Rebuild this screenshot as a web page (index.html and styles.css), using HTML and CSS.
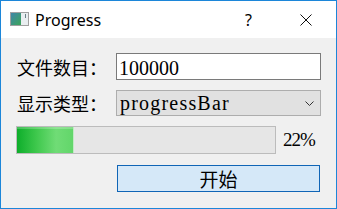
FILE: index.html
```html
<!DOCTYPE html>
<html lang="zh-CN">
<head>
    <meta charset="UTF-8">
    <title>Progress</title>
    <link rel="stylesheet" href="styles.css">
</head>
<body>
    <div class="window">
        <div class="titlebar">
            <svg class="app-icon" width="19" height="14" viewBox="0 0 19 14">
                <defs>
                    <linearGradient id="ico" x1="0" y1="0" x2="1" y2="1">
                        <stop offset="0" stop-color="#3f86a8"/>
                        <stop offset="1" stop-color="#3da55a"/>
                    </linearGradient>
                </defs>
                <rect x="0.5" y="0.5" width="18" height="13" fill="#f2f2f2" stroke="#a0a0a0"/>
                <rect x="1" y="1" width="10" height="12" fill="url(#ico)"/>
                <rect x="11" y="1" width="7" height="12" fill="#e9eef0"/>
                <rect x="15" y="2" width="1" height="4" fill="#6b7f88"/>
            </svg>
            <span class="title">Progress</span>
            <span class="help">?</span>
            <svg class="close" width="12" height="12" viewBox="0 0 12 12">
                <path d="M0.5 0.5 L11.5 11.5 M11.5 0.5 L0.5 11.5" stroke="#111" stroke-width="1" fill="none"/>
            </svg>
        </div>

        <div class="content">
            <div class="field-row">
                <label class="field-label">文件数目：</label>
                <div class="line-edit">100000</div>
            </div>
            <div class="field-row">
                <label class="field-label">显示类型：</label>
                <div class="combo">
                    <span class="combo-text">progressBar</span>
                    <svg class="chevron" width="9" height="5" viewBox="0 0 9 5">
                        <path d="M0.5 0.5 L4.5 4.5 L8.5 0.5" stroke="#333" stroke-width="1" fill="none"/>
                    </svg>
                </div>
            </div>
            <div class="progress-row">
                <div class="progress">
                    <div class="chunk" style="width: 22%"></div>
                </div>
                <span class="percent">22%</span>
            </div>
            <button class="start-btn">开始</button>
        </div>
    </div>
</body>
</html>
```

FILE: styles.css
```css
body {
    margin: 0;
    background: #f0f0f0;
}

.window {
    width: 337px;
    height: 209px;
    box-sizing: border-box;
    border: 1px solid #1c86d9;
    background: #f0f0f0;
}

.titlebar {
    height: 37px;
    background: #fff;
    display: flex;
    align-items: center;
    padding-left: 9px;
    font-family: "Noto Sans", sans-serif;
    font-size: 16px;
    color: #000;
}

.app-icon {
    margin-top: -1px;
}

.title {
    margin-left: 6px;
}

.help {
    margin-left: auto;
    margin-right: 48px;
}

.close {
    margin-right: 24px;
}

.content {
    padding: 15px 15px 0 15px;
    display: flex;
    flex-direction: column;
}

.field-row {
    display: grid;
    grid-template-columns: 100px 1fr;
    align-items: center;
}

.field-row + .field-row {
    margin-top: 10px;
}

.field-label {
    padding-left: 1px;
    font-family: "Noto Sans CJK SC", sans-serif;
    font-size: 18px;
    line-height: 1;
    color: #000;
}

.line-edit {
    height: 27px;
    box-sizing: border-box;
    border: 1px solid #7a7a7a;
    background: #fff;
    padding: 3px 0 0 2px;
    font-family: "Liberation Serif", serif;
    font-size: 20px;
    line-height: 22px;
}

.combo {
    height: 26px;
    box-sizing: border-box;
    border: 1px solid #adadad;
    background: #e1e1e1;
    padding: 1px 6px 0 3px;
    display: flex;
    justify-content: space-between;
    align-items: flex-start;
}

.combo-text {
    font-family: "Liberation Serif", serif;
    font-size: 20px;
    line-height: 22px;
    letter-spacing: 1.2px;
}

.chevron {
    align-self: center;
}

.progress-row {
    margin-top: 10px;
    display: flex;
    align-items: center;
}

.progress {
    width: 260px;
    height: 28px;
    box-sizing: border-box;
    border: 1px solid #bcbcbc;
    background: #e6e6e6;
}

.chunk {
    height: 100%;
    box-sizing: border-box;
    border-right: 1px solid #c2eac5;
    background: linear-gradient(to right, #0eae2b 0%, #3fc84d 35%, #70dc76 70%, #62d66a 100%);
    box-shadow: inset 0 2px 0 rgba(255, 255, 255, 0.22);
}

.percent {
    margin-left: 7px;
    font-family: "Liberation Serif", serif;
    font-size: 19px;
    letter-spacing: -1px;
}

.start-btn {
    margin-top: 11px;
    margin-left: 101px;
    width: 203px;
    height: 27px;
    padding: 0;
    border: 1px solid #1065b6;
    background: #d5e8f8;
    font-family: "Noto Sans CJK SC", sans-serif;
    font-size: 19px;
    line-height: 1;
    color: #000;
}
```
